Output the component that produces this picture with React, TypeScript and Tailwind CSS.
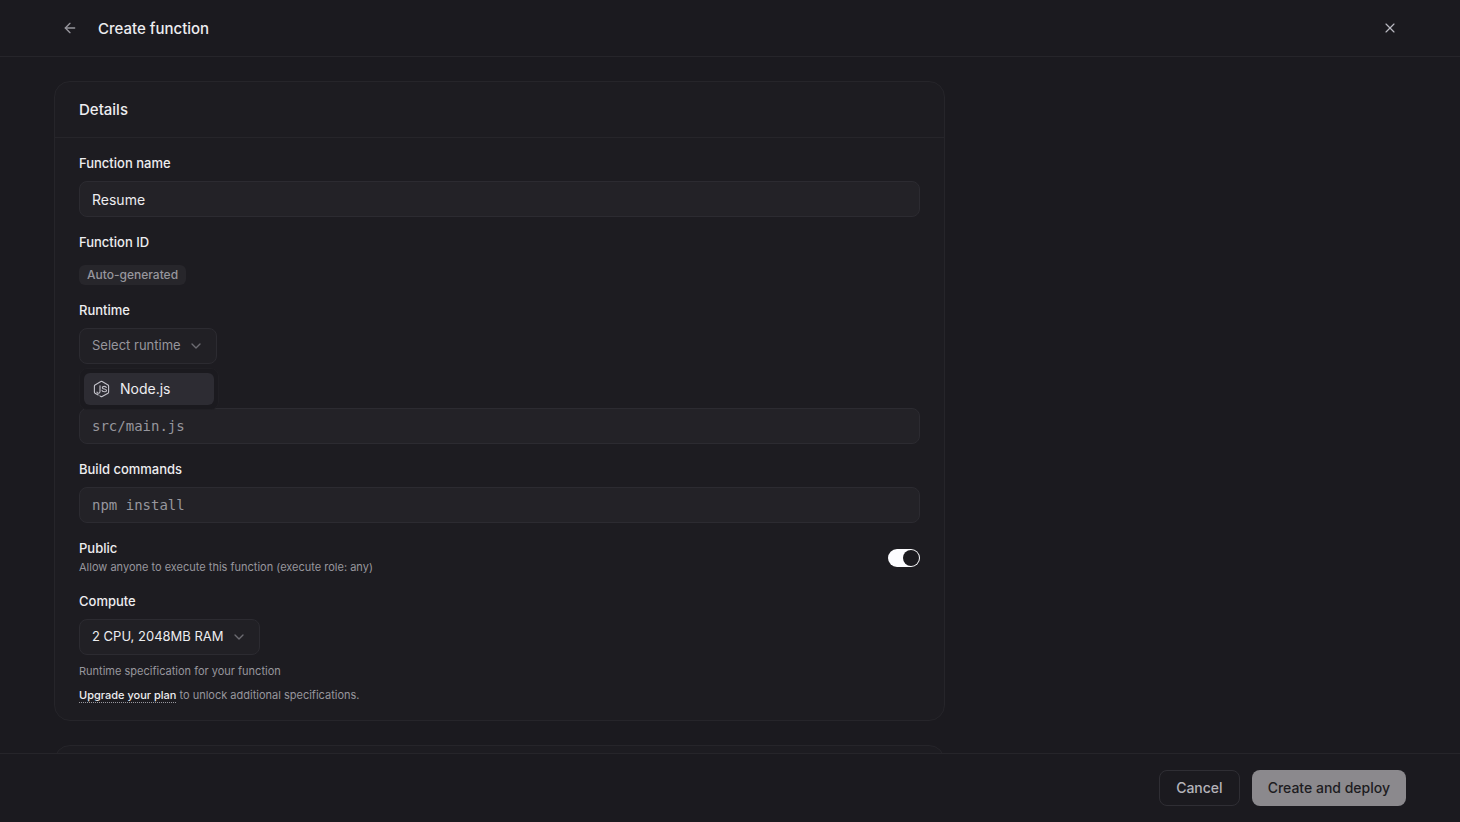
import { useState } from "react";
import type { ReactNode } from "react";
import { ArrowLeft, ChevronDown, X } from "lucide-react";

const labelClass = "self-start text-[13px] leading-[19px] font-medium text-[#ededf0]";
const inputClass =
  "h-9 w-full rounded-lg border border-[#2c2b31] bg-[#232227] px-3 text-sm text-[#ededf0] outline-none placeholder:text-[#97969d] placeholder:opacity-100";

function NodeIcon() {
  return (
    <svg
      viewBox="0 0 20 20"
      className="size-5 text-[#c3c2ca]"
      fill="none"
      stroke="currentColor"
      strokeWidth="1.1"
      strokeLinecap="round"
      strokeLinejoin="round"
      aria-hidden="true"
    >
      <path d="M6.2 16 3 14.2a1.2 1.2 0 0 1-.6-1V6.9a1.2 1.2 0 0 1 .6-1l5.9-3.3a1.2 1.2 0 0 1 1.2 0L16 5.9a1.2 1.2 0 0 1 .6 1v6.3a1.2 1.2 0 0 1-.6 1l-5.9 3.3a1.2 1.2 0 0 1-1.2 0l-1-.6" />
      <path d="M8 6.8v5.7c0 1.200-.6 1.800-1.600 1.800-.7 0-1.400-.4-1.400-1.300" />
      <path d="M14.300 8.500c-.2-.8-.9-1.100-2-1.100-1.300 0-2 .5-2 1.300 0 .9.800 1.100 2.100 1.300 1.400.2 2.100.5 2.100 1.400 0 .9-.8 1.400-2.200 1.400-1.400 0-2.200-.5-2.300-1.500" />
    </svg>
  );
}

function Field({ id, label, children }: { id: string; label: string; children: ReactNode }) {
  return (
    <div className="flex flex-col gap-2">
      <label htmlFor={id} className={labelClass}>
        {label}
      </label>
      {children}
    </div>
  );
}

function Select({
  id,
  value,
  muted = false,
  children,
}: {
  id: string;
  value: string;
  muted?: boolean;
  children?: ReactNode;
}) {
  return (
    <div className="relative self-start">
      <select
        id={id}
        defaultValue={value}
        className={`block h-9 appearance-none rounded-lg border border-[#2c2b31] bg-[#212025] pr-[35px] pl-3 text-[13px] outline-none ${
          muted ? "text-[#97969d]" : "text-[#ededf0]"
        }`}
      >
        <option>{value}</option>
      </select>
      <ChevronDown
        className="pointer-events-none absolute top-1/2 right-[13px] size-4 -translate-y-1/2 text-[#6c6b72]"
        strokeWidth={2}
      />
      {children}
    </div>
  );
}

function RuntimeMenu() {
  return (
    <ul
      role="listbox"
      aria-label="Runtime"
      className="absolute top-full left-0 z-10 mt-1 w-[140px] rounded-lg border border-[#201f24] bg-[#1b1a1f] p-1"
    >
      <li
        role="option"
        aria-selected="true"
        className="flex h-8 items-center gap-2 rounded-md bg-[#2d2c33] px-2 text-sm text-[#ededf0]"
      >
        <NodeIcon />
        Node.js
      </li>
    </ul>
  );
}

function Toggle({ id }: { id: string }) {
  const [on, setOn] = useState(true);
  return (
    <span className="relative flex h-[18px] w-8">
      <input
        id={id}
        type="checkbox"
        role="switch"
        checked={on}
        onChange={() => setOn(!on)}
        className="peer h-full w-full cursor-pointer appearance-none rounded-full bg-[#56565c] checked:bg-[#fcfcff]"
      />
      <span className="pointer-events-none absolute top-px left-px size-4 rounded-full bg-[#1b1a1f] peer-checked:left-[15px]" />
    </span>
  );
}

export default function App() {
  return (
    <div className="flex h-screen flex-col bg-[#1b1a1f] font-['Inter',sans-serif] text-[#ededf0]">
      <header className="flex h-[57px] shrink-0 items-center justify-between border-b border-[#26252a] px-[54px]">
        <div className="flex items-center gap-3">
          <button type="button" aria-label="Back" className="flex size-8 items-center justify-center text-[#97969d]">
            <ArrowLeft className="size-4" strokeWidth={2} />
          </button>
          <h1 className="text-[15px] leading-[23px] font-medium">Create function</h1>
        </div>
        <button type="button" aria-label="Close" className="flex size-8 items-center justify-center text-[#b9b8c0]">
          <X className="size-4" strokeWidth={1.75} />
        </button>
      </header>

      <main className="min-h-0 flex-1 overflow-y-auto px-[54px] pt-6 [scrollbar-width:none]">
        <div className="grid grid-cols-[2fr_1fr] gap-4">
          <form className="flex flex-col gap-6">
            <section className="rounded-2xl border border-[#26252a] bg-[#1d1c21]">
              <h2 className="border-b border-[#26252a] px-6 py-4 text-[15px] leading-[23px] font-medium">Details</h2>
              <div className="flex flex-col gap-4 px-6 pt-4 pb-[17px]">
                <Field id="name" label="Function name">
                  <input id="name" defaultValue="Resume" className={inputClass} />
                </Field>

                <div className="flex flex-col gap-[13px]">
                  <span className={labelClass}>Function ID</span>
                  <span className="self-start rounded-md bg-[#27262b] px-2 text-xs leading-5 font-medium text-[#97969d]">
                    Auto-generated
                  </span>
                </div>

                <Field id="runtime" label="Runtime">
                  <Select id="runtime" value="Select runtime" muted>
                    <RuntimeMenu />
                  </Select>
                </Field>

                <div className="pt-7">
                  <input
                    aria-label="Entrypoint"
                    placeholder="src/main.js"
                    className={`${inputClass} block font-['DejaVu_Sans_Mono',monospace]`}
                  />
                </div>

                <Field id="build" label="Build commands">
                  <input id="build" placeholder="npm install" className={`${inputClass} font-['DejaVu_Sans_Mono',monospace]`} />
                </Field>

                <div className="flex items-center justify-between">
                  <div className="flex flex-col">
                    <label htmlFor="public" className={labelClass}>
                      Public
                    </label>
                    <p className="text-[11px] leading-[18px] text-[#97969d]">
                      Allow anyone to execute this function (execute role: any)
                    </p>
                  </div>
                  <Toggle id="public" />
                </div>

                <Field id="compute" label="Compute">
                  <Select id="compute" value="2 CPU, 2048MB RAM" />
                  <div className="flex flex-col gap-2 text-[11px] leading-4 text-[#97969d]">
                    <p>Runtime specification for your function</p>
                    <p>
                      <a
                        href="#upgrade"
                        className="border-b border-dotted border-[#97969d] font-medium text-[#ededf0]"
                      >
                        Upgrade your plan
                      </a>{" "}
                      to unlock additional specifications.
                    </p>
                  </div>
                </Field>
              </div>
            </section>

            <section className="h-40 rounded-2xl border border-[#26252a] bg-[#1d1c21]" />
          </form>
        </div>
      </main>

      <footer className="flex shrink-0 justify-end gap-3 border-t border-[#26252a] px-[54px] py-4">
        <button
          type="button"
          className="h-9 rounded-lg border border-[#2f2e34] px-4 text-sm font-medium text-[#b4b3ba]"
        >
          Cancel
        </button>
        <button type="button" className="h-9 rounded-lg bg-[#8b898d] px-4 text-sm font-medium text-[#1d1c21]">
          Create and deploy
        </button>
      </footer>
    </div>
  );
}
